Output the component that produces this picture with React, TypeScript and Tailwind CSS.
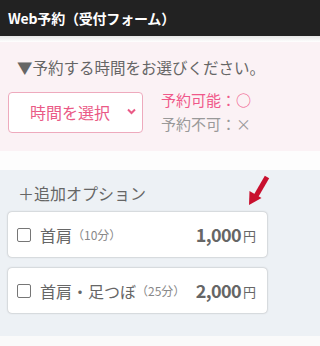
import React from 'react'

const font = { fontFamily: '"Noto Sans CJK JP", "Noto Sans", sans-serif' }

function OptionCard({ name, minutes, price }: { name: string; minutes: string; price: string }) {
  return (
    <label className="flex h-[45px] w-[259px] items-center rounded-[4px] bg-white pl-[9px] pr-[11px] shadow-[0_0_2px_rgba(0,0,0,0.35)]">
      <span className="h-[14px] w-[14px] rounded-[2px] border border-[#767676] bg-white" />
      <span className="ml-[9px] text-[16px] text-[#666]">{name}</span>
      <span className="text-[12px] text-[#888]">（{minutes}）</span>
      <span className="ml-auto text-[18px] font-semibold tracking-[-0.6px] text-[#666]">{price}</span>
      <span className="ml-[2px] mt-[3px] text-[13px] text-[#666]">円</span>
    </label>
  )
}

export default function App() {
  return (
    <div className="w-[320px] h-[346px] bg-[#fafafa] overflow-hidden" style={font}>
      {/* header */}
      <div className="h-[36px] bg-[#222] px-[8px] flex items-center">
        <span className="text-[14px] font-bold text-white tracking-[-0.2px]">Web予約（受付フォーム）</span>
      </div>
      <div className="h-[6px] bg-gradient-to-b from-[#e6e6e6] to-white" />

      {/* time selection */}
      <div className="h-[109px] bg-[#fbf2f5] px-[8px] pt-[14px]">
        <p className="pl-[9px] text-[15.5px] leading-[22px] text-[#666]">▼予約する時間をお選びください。</p>
        <div className="mt-[10px] flex items-center">
          <div className="relative flex h-[41px] w-[135px] items-center rounded-[4px] border border-[#eeaabd] bg-white pl-[21px]">
            <span className="text-[16px] text-[#ea5a86]">時間を選択</span>
            <svg className="absolute right-[6px] top-[15px]" width="9" height="7" viewBox="0 0 9 7">
              <path d="M1 1.5 L4.5 5 L8 1.5" fill="none" stroke="#ea5a86" strokeWidth="2" />
            </svg>
          </div>
          <div className="ml-[18px] flex flex-col text-[15px] leading-[24px]">
            <span className="text-[#f0588a]">予約可能：○</span>
            <span className="text-[#999]">予約不可：×</span>
          </div>
        </div>
      </div>
      <div className="h-[19px] bg-[#fdfdfd]" />

      {/* options */}
      <div className="relative h-[166px] bg-[#edf1f5] px-[8px] pt-[12px]">
        <p className="pl-[10px] text-[16px] leading-[22px] text-[#666]">＋追加オプション</p>
        <svg className="absolute left-[247px] top-[5px]" width="24" height="32" viewBox="0 0 24 32">
          <path d="M20 2 L9 21" stroke="#c8102e" strokeWidth="5" fill="none" />
          <path d="M2 30 L2.5 16 L14.5 23 Z" fill="#c8102e" />
        </svg>
        <div className="mt-[8px] flex flex-col gap-[11px]">
          <OptionCard name="首肩" minutes="10分" price="1,000" />
          <OptionCard name="首肩・足つぼ" minutes="25分" price="2,000" />
        </div>
      </div>
    </div>
  )
}
